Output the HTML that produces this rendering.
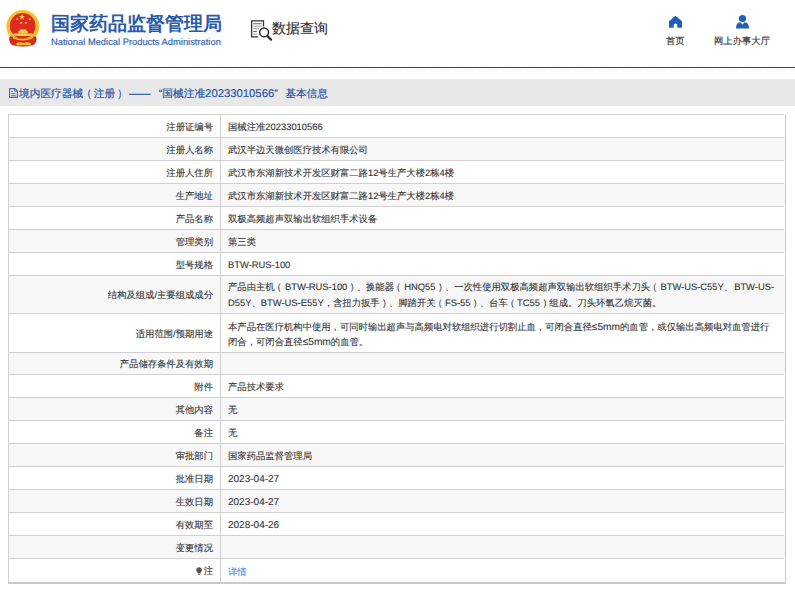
<!DOCTYPE html>
<html><head><meta charset="utf-8">
<style>
*{margin:0;padding:0;box-sizing:border-box}
html,body{width:795px;height:589px;overflow:hidden;background:#fff;font-family:"Liberation Sans",sans-serif;text-rendering:geometricPrecision;text-spacing-trim:space-all}
.abs{position:absolute}
.t1{position:absolute;left:51px;top:13.5px;font-size:19px;line-height:22px;color:#2a5aa8;font-weight:bold;white-space:nowrap}
.t2{position:absolute;left:51px;top:36px;font-size:9.35px;line-height:12px;color:#2f62b0;white-space:nowrap}
.sjt{position:absolute;left:272px;top:19px;font-size:14px;line-height:18px;color:#2e2e2e;white-space:nowrap}
.nav{position:absolute;top:34.5px;font-size:9.33px;line-height:12px;color:#3a3a3a;white-space:nowrap}
.blue{position:absolute;left:0;top:67px;width:795px;height:1px;background:#1f4a80}
.hatch{position:absolute;left:0;top:69px;width:795px;height:2px;background:repeating-linear-gradient(135deg,#ebebeb 0 0.7px,#fff 0.7px 2.12px)}
.band{position:absolute;left:0;top:79px;width:795px;height:27px;background:#e8e8e8}
.crumb{position:absolute;left:19px;top:86.5px;font-size:10.7px;line-height:14px;color:#2256aa;white-space:nowrap}
.crumb .e{font-size:11.3px}
.crumb{-webkit-text-stroke:0.18px #2256aa}
.lab,.val{-webkit-text-stroke:0.12px #444}
.sjt,.nav{-webkit-text-stroke:0.15px #333}
.t2{-webkit-text-stroke:0.15px #2f62b0}
.row{position:absolute;left:8px;width:778px}
.lab{position:absolute;left:0;top:0;bottom:0;width:212px;padding-right:7px;display:flex;align-items:center;justify-content:flex-end;font-size:9.33px;color:#333;white-space:nowrap;padding-top:3.6px}
.val{position:absolute;left:213px;top:0;bottom:0;right:0;padding-left:7px;display:flex;align-items:center;font-size:9.33px;color:#333;white-space:nowrap;line-height:15px;padding-top:3.6px}
.val>div{}
.e{font-size:9.4px}
.m{font-size:10.2px}
.d{font-size:10px}
.hl{position:absolute;left:8px;width:776px;height:1px;background:#d0d0d0}
.vl{position:absolute;top:114px;height:469px;width:1px;background:#d0d0d0}
.bot{position:absolute;left:8px;top:582px;width:778px;height:2px;background:#c9c9c9}
a{color:#3a8ee4;text-decoration:none}
.bulb{display:inline-block;margin-right:1.6px;vertical-align:-0.5px}
a{position:relative;top:1px;-webkit-text-stroke:0.12px #3a8ee4}
.ln{display:inline-block}
.lp{position:relative;left:-2.4px}
.rp{position:relative;left:2.4px}
#l8a .e{margin-left:1px}
#l9a,#l9b{position:relative;top:1px}
#l8a,#l8b{position:relative;top:-0.8px}
</style></head><body>
<svg class="abs" style="left:5px;top:8px" width="36" height="40" viewBox="0 0 36 40">
  <circle cx="17.85" cy="18.4" r="16.5" fill="#f2c033"/>
  <circle cx="17.7" cy="17.9" r="12.8" fill="#dc2b1f"/>
  <path d="M13.3 25.6 V23.2 H14.6 V21.6 H21.4 V23.2 H22.7 V25.6Z" fill="#f7cf4a"/>
  <path d="M8.5 25.4 H27 L28.3 27.2 Q17.8 29 7.2 27.2Z" fill="#f7cf4a"/>
  <path d="M4.2 29.5 Q5.2 27.5 7.5 28.8 Q17.8 33 28.2 28.8 Q30.5 27.5 31.5 29.5 Q32 35 28 37.2 Q17.8 40 7.6 37.2 Q3.7 35 4.2 29.5Z" fill="#d52a1e"/>
  <path d="M7.5 28.8 Q17.8 33.2 28.2 28.8 L27.5 30.6 Q17.8 34.5 8.2 30.6Z" fill="#f2c033"/>
  <path d="M17 6.1 L17.8 8 L19.8 8.1 L18.3 9.4 L18.8 11.4 L17 10.3 L15.2 11.4 L15.7 9.4 L14.2 8.1 L16.2 8Z" fill="#f7cf4a"/>
  <circle cx="12.3" cy="11.2" r="1" fill="#f7cf4a"/><circle cx="24.8" cy="11.2" r="1" fill="#f7cf4a"/>
  <circle cx="16.2" cy="15.1" r="1" fill="#f7cf4a"/><circle cx="20.9" cy="15.1" r="1" fill="#f7cf4a"/>
  <path d="M11.2 35.2 Q14.5 33.6 18.7 35 Q22.5 33.6 26.2 35.2 L25.6 37.6 Q18.7 36.4 11.8 37.6Z" fill="#f2c033"/>
</svg>
<div class="t1">国家药品监督管理局</div>
<div class="t2">National Medical Products Administration</div>
<svg class="abs" style="left:250px;top:19px" width="24" height="23" viewBox="0 0 24 23">
  <path d="M13.5 7.5 V1.9 H1.6 V17.9 H8" fill="none" stroke="#333" stroke-width="1.3"/>
  <path d="M3.2 4.8 H11.7 M3.2 12.5 H7" stroke="#666" stroke-width="1.1"/>
  <path d="M3.2 7.2 H11.7 M3.2 9.8 H9 M3.2 15 H7" stroke="#999" stroke-width="1.1"/>
  <circle cx="14.1" cy="13.4" r="4.4" fill="#fff" stroke="#2a2a2a" stroke-width="1.5"/>
  <path d="M17.6 17.2 L21 20.6" stroke="#2a2a2a" stroke-width="2.3" stroke-linecap="round"/>
</svg>
<div class="sjt">数据查询</div>
<svg class="abs" style="left:668px;top:15px" width="15" height="14" viewBox="0 0 15 14">
  <path d="M7.5 0.8 L14 6.3 V12.8 H9.3 V10.2 Q9.3 8.6 7.5 8.6 Q5.7 8.6 5.7 10.2 V12.8 H1 V6.3 Z" fill="#1e5fba"/>
</svg>
<div class="nav" style="left:666px">首页</div>
<svg class="abs" style="left:735px;top:14px" width="15" height="15" viewBox="0 0 15 15">
  <circle cx="7.5" cy="4.5" r="3.6" fill="#1e5fba"/>
  <path d="M1 14.5 Q1 8.5 5.2 8.3 L7.5 10.6 L9.8 8.3 Q14 8.5 14 14.5 Z" fill="#1e5fba"/>
</svg>
<div class="nav" style="left:714px">网上办事大厅</div>
<div class="blue"></div>
<div class="hatch"></div>
<div class="band"></div>
<svg class="abs" style="left:9px;top:88px" width="9" height="10" viewBox="0 0 9 10">
  <path d="M0.6 0.6 H5.9 L8.4 3.1 V9.4 H0.6 Z" fill="none" stroke="#4a68a6" stroke-width="1.1"/>
  <path d="M5.6 0.8 V3.4 H8.2" fill="none" stroke="#4a68a6" stroke-width="0.9"/>
  <path d="M2.3 3.4 H4.2 M2.3 5.6 H6.6 M2.3 7.6 H6.6" stroke="#4a68a6" stroke-width="0.9"/>
</svg>
<div class="crumb">境内医疗器械<span style="position:relative;left:-1.9px">（</span>注册<span style="position:relative;left:1.9px">）</span><span style="margin-left:3px;letter-spacing:0.3px">——</span><span style="display:inline-block;width:11.5px;text-align:right">“</span>国械注准<span class="e">20233010566</span><span style="display:inline-block;width:11px;text-align:left">”</span>基本信息</div>
<div class="row" style="top:114px;height:23px;background:#fff"><div class="lab"><div>注册证编号</div></div><div class="val"><div>国械注准<span class="e">20233010566</span></div></div></div>
<div class="row" style="top:137px;height:23px;background:#f7f7f7"><div class="lab"><div>注册人名称</div></div><div class="val"><div>武汉半边天微创医疗技术有限公司</div></div></div>
<div class="row" style="top:160px;height:23px;background:#fff"><div class="lab"><div>注册人住所</div></div><div class="val"><div>武汉市东湖新技术开发区财富二路<span class="e">12</span>号生产大楼<span class="e">2</span>栋<span class="e">4</span>楼</div></div></div>
<div class="row" style="top:183px;height:23px;background:#f7f7f7"><div class="lab"><div>生产地址</div></div><div class="val"><div>武汉市东湖新技术开发区财富二路<span class="e">12</span>号生产大楼<span class="e">2</span>栋<span class="e">4</span>楼</div></div></div>
<div class="row" style="top:206px;height:23px;background:#fff"><div class="lab"><div>产品名称</div></div><div class="val"><div>双极高频超声双输出软组织手术设备</div></div></div>
<div class="row" style="top:229px;height:23px;background:#f7f7f7"><div class="lab"><div>管理类别</div></div><div class="val"><div>第三类</div></div></div>
<div class="row" style="top:252px;height:23px;background:#fff"><div class="lab"><div>型号规格</div></div><div class="val"><div><span class="e">BTW-RUS-100</span></div></div></div>
<div class="row" style="top:275px;height:38px;background:#f7f7f7"><div class="lab"><div>结构及组成/主要组成成分</div></div><div class="val"><div><span class='ln' id='l8a'>产品由主机<span class="lp">（</span><span class="e">BTW-RUS-100</span><span class="rp">）</span>、换能器<span class="lp">（</span><span class="e">HNQ55</span><span class="rp">）</span>、一次性使用双极高频超声双输出软组织手术刀头<span class="lp">（</span><span class="e">BTW-US-C55Y</span>、<span class="e">BTW-US-</span></span><br><span class='ln' id='l8b'><span class="e">D55Y</span>、<span class="e">BTW-US-E55Y</span>，含扭力扳手<span class="rp">）</span>、脚踏开关<span class="lp">（</span><span class="e">FS-55</span><span class="rp">）</span>、台车<span class="lp">（</span><span class="e">TC55</span><span class="rp">）</span>组成。刀头环氧乙烷灭菌。</span></div></div></div>
<div class="row" style="top:313px;height:39px;background:#fff"><div class="lab"><div>适用范围/预期用途</div></div><div class="val"><div><span class='ln' id='l9a'>本产品在医疗机构中使用，可同时输出超声与高频电对软组织进行切割止血，可闭合直径<span class="m">≤5mm</span>的血管，或仅输出高频电对血管进行</span><br><span class='ln' id='l9b'>闭合，可闭合直径<span class="m">≤5mm</span>的血管。</span></div></div></div>
<div class="row" style="top:352px;height:22px;background:#f7f7f7"><div class="lab"><div>产品储存条件及有效期</div></div><div class="val"><div></div></div></div>
<div class="row" style="top:374px;height:23px;background:#fff"><div class="lab"><div>附件</div></div><div class="val"><div>产品技术要求</div></div></div>
<div class="row" style="top:397px;height:23px;background:#f7f7f7"><div class="lab"><div>其他内容</div></div><div class="val"><div>无</div></div></div>
<div class="row" style="top:420px;height:23px;background:#fff"><div class="lab"><div>备注</div></div><div class="val"><div>无</div></div></div>
<div class="row" style="top:443px;height:23px;background:#f7f7f7"><div class="lab"><div>审批部门</div></div><div class="val"><div>国家药品监督管理局</div></div></div>
<div class="row" style="top:466px;height:23px;background:#fff"><div class="lab"><div>批准日期</div></div><div class="val"><div><span class="d">2023-04-27</span></div></div></div>
<div class="row" style="top:489px;height:23px;background:#f7f7f7"><div class="lab"><div>生效日期</div></div><div class="val"><div><span class="d">2023-04-27</span></div></div></div>
<div class="row" style="top:512px;height:23px;background:#fff"><div class="lab"><div>有效期至</div></div><div class="val"><div><span class="d">2028-04-26</span></div></div></div>
<div class="row" style="top:535px;height:23px;background:#f7f7f7"><div class="lab"><div>变更情况</div></div><div class="val"><div></div></div></div>
<div class="row" style="top:558px;height:24px;background:#fff"><div class="lab"><div><svg class='bulb' width='6.2' height='8' viewBox='0 0 7 9'><path d='M3.5 0.3 C1.6 0.3 0.3 1.7 0.3 3.4 C0.3 4.7 1.1 5.4 1.7 6.1 L1.9 7.3 H5.1 L5.3 6.1 C5.9 5.4 6.7 4.7 6.7 3.4 C6.7 1.7 5.4 0.3 3.5 0.3Z M2.2 7.8 H4.8 L4.5 8.7 H2.5Z' fill='#555'/></svg>注</div></div><div class="val"><div><a>详情</a></div></div></div>
<div class="hl" style="top:114px"></div><div class="hl" style="top:137px"></div><div class="hl" style="top:160px"></div><div class="hl" style="top:183px"></div><div class="hl" style="top:206px"></div><div class="hl" style="top:229px"></div><div class="hl" style="top:252px"></div><div class="hl" style="top:275px"></div><div class="hl" style="top:313px"></div><div class="hl" style="top:352px"></div><div class="hl" style="top:374px"></div><div class="hl" style="top:397px"></div><div class="hl" style="top:420px"></div><div class="hl" style="top:443px"></div><div class="hl" style="top:466px"></div><div class="hl" style="top:489px"></div><div class="hl" style="top:512px"></div><div class="hl" style="top:535px"></div><div class="hl" style="top:558px"></div>
<div class="vl" style="left:8px"></div>
<div class="vl" style="left:220px"></div>
<div class="vl" style="left:785px;background:#c8c8d0"></div>
<div class="bot"></div>
</body></html>
